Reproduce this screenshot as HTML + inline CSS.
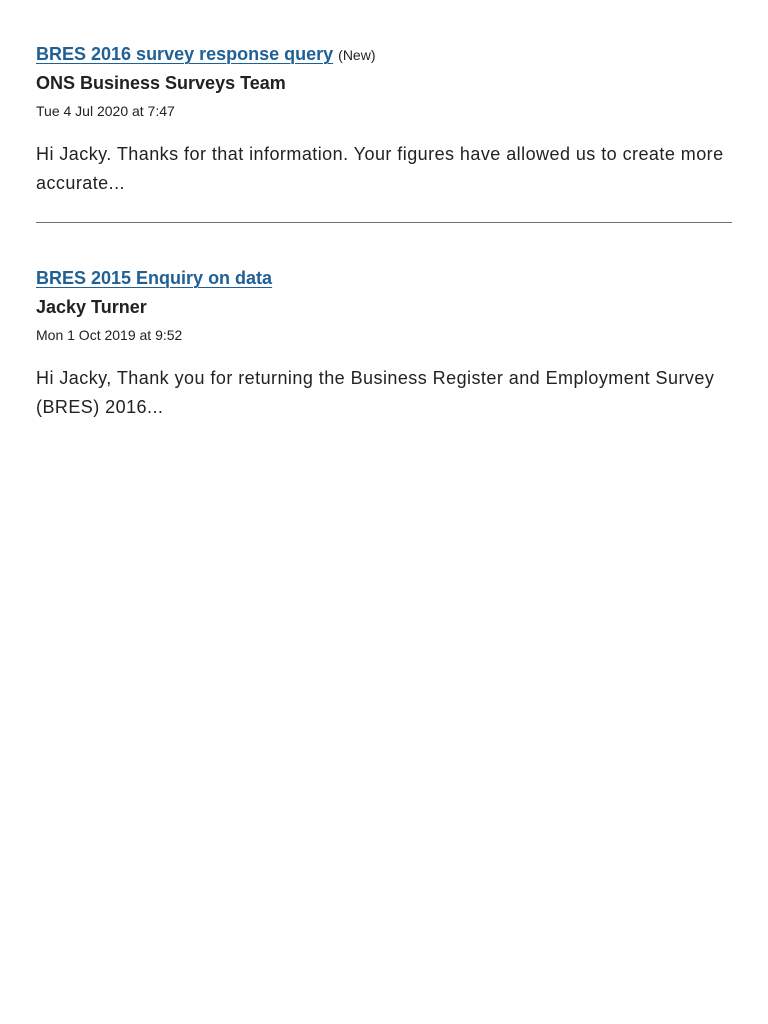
<!DOCTYPE html>
<html><head><meta charset="utf-8"><style>
body{margin:0;background:#fff;font-family:"Liberation Sans",sans-serif;color:#222;}
.wrap{position:absolute;left:36px;width:696px;}
.t{position:absolute;left:0;white-space:nowrap;}
a{color:#206095;font-weight:bold;font-size:18px;text-decoration:underline;text-underline-offset:3px;text-decoration-thickness:1px;}
.new{font-size:14px;color:#222;font-weight:normal;margin-left:5px;}
.n{font-size:18px;font-weight:bold;}
.d{font-size:14px;}
.b{font-size:18px;line-height:28.5px;letter-spacing:0.45px;white-space:normal;width:705px;}
hr{position:absolute;left:36px;width:696px;top:222px;margin:0;border:0;border-top:1px solid #707071;}
</style></head><body>
<div class="wrap">
<div class="t" style="top:44px"><a>BRES 2016 survey response query</a><span class="new">(New)</span></div>
<div class="t n" style="top:73px">ONS Business Surveys Team</div>
<div class="t d" style="top:103px">Tue 4 Jul 2020 at 7:47</div>
<div class="t b" style="top:140px">Hi Jacky. Thanks for that information. Your figures have allowed us to create more accurate...</div>
<div class="t" style="top:268px"><a>BRES 2015 Enquiry on data</a></div>
<div class="t n" style="top:297px">Jacky Turner</div>
<div class="t d" style="top:327px">Mon 1 Oct 2019 at 9:52</div>
<div class="t b" style="top:364px">Hi Jacky, Thank you for returning the Business Register and Employment Survey (BRES) 2016...</div>
</div>
<hr>
</body></html>
